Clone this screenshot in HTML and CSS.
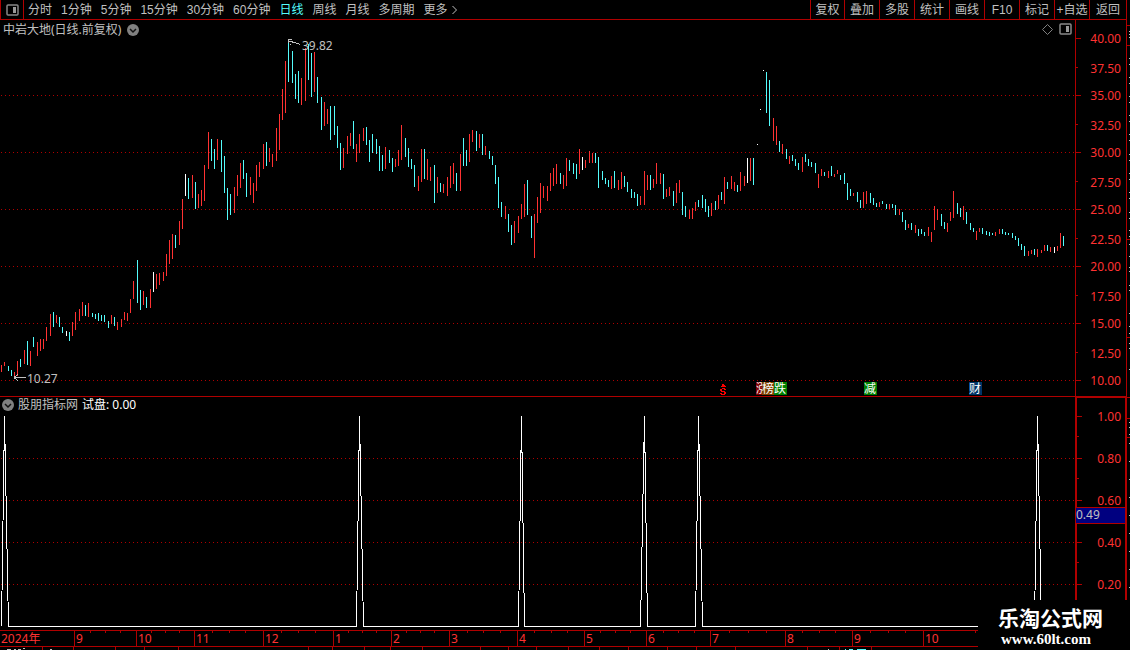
FILE: index.html
```
<!DOCTYPE html>
<html lang="zh-CN">
<head>
    <meta charset="UTF-8">
    <meta name="viewport" content="width=device-width, initial-scale=1.0">
    <title>中岩大地 日线</title>
    <link rel="stylesheet" href="styles.css">
</head>
<body>
    <div class="app">
        <header class="toolbar">
            <button class="layout-btn" aria-label="布局">
                <svg width="13" height="12" viewBox="0 0 13 12"><rect x="1" y="1" width="11" height="10" rx="1" fill="none" stroke="#888" stroke-width="1.5"/><rect x="7" y="3" width="3" height="6" fill="#999"/></svg>
            </button>
            <nav class="periods">
                <button>分时</button>
                <button>1分钟</button>
                <button>5分钟</button>
                <button>15分钟</button>
                <button>30分钟</button>
                <button>60分钟</button>
                <button class="active">日线</button>
                <button>周线</button>
                <button>月线</button>
                <button>多周期</button>
                <button>更多<svg width="8" height="10" viewBox="0 0 8 10"><path d="M2.5 1L6.5 5L2.5 9" fill="none" stroke="#c0c0c0"/></svg></button>
            </nav>
            <nav class="tools">
                <button>复权</button>
                <button>叠加</button>
                <button>多股</button>
                <button>统计</button>
                <button>画线</button>
                <button>F10</button>
                <button>标记</button>
                <button>+自选</button>
                <button>返回</button>
            </nav>
        </header>

        <section class="panel price">
            <div class="chart">
                <svg class="plot" shape-rendering="crispEdges">
                    <g transform="translate(0 -20)">
                        <g class="grid">
                            <line x1="1" y1="95.5" x2="100%" y2="95.5"/>
                            <line x1="1" y1="152.5" x2="100%" y2="152.5"/>
                            <line x1="1" y1="209.5" x2="100%" y2="209.5"/>
                            <line x1="1" y1="266.5" x2="100%" y2="266.5"/>
                            <line x1="1" y1="323.5" x2="100%" y2="323.5"/>
                            <line x1="1" y1="380.5" x2="100%" y2="380.5"/>
                        </g>
                        <path id="up" class="bar-up"/>
                        <path id="down" class="bar-down"/>
                        <path id="flat" class="bar-flat"/>
                        <path class="arrow" d="M288 39.5H292M289 41.5H293M292 42.5H296M296 43.5H299M299 44.5H300M288.5 40V43M290 44.5H291"/>
                        <path class="arrow" d="M14 377.5H26M15.5 376V379M16.5 375V376M17.5 374V375M16.5 379V380M17.5 380V381M14 376.5H16M14 378.5H16"/>
                    </g>
                </svg>
                <div class="caption">
                    <span>中岩大地(日线.前复权)</span>
                    <button class="drop" aria-label="展开"><svg width="12" height="12" viewBox="0 0 12 12"><circle cx="6" cy="6" r="6" fill="#808080"/><path d="M3 5L6 8L9 5" fill="none" stroke="#111" stroke-width="1.5"/></svg></button>
                </div>
                <div class="corner">
                    <svg width="11" height="11" viewBox="0 0 11 11"><path d="M5.5 .5L10.5 5.5L5.5 10.5L.5 5.5Z" fill="none" stroke="#808080"/></svg>
                    <svg width="13" height="12" viewBox="0 0 13 12"><rect x="1" y="1" width="11" height="10" rx="1" fill="none" stroke="#888" stroke-width="1.5"/><rect x="7" y="3" width="3" height="6" fill="#999"/></svg>
                </div>
                <span class="note high">39.82</span>
                <span class="note low">10.27</span>
                <svg class="mark dollar" width="7" height="12" viewBox="0 0 7 12" shape-rendering="crispEdges"><path d="M2 0H4V1H5V2H6V3H1V2H2ZM2 4H5V5H6V6H4V5H2V7H5V8H6V10H5V11H1V10H0V9H2V10H4V8H1V7H0V5H2Z" fill="#f00"/></svg>
                <span class="mark rise">涨</span>
                <span class="mark rank">榜</span>
                <span class="mark fall">跌</span>
                <span class="mark cut">减</span>
                <span class="mark report">财</span>
            </div>
            <ul class="scale">
                <li>40.00</li>
                <li>37.50</li>
                <li>35.00</li>
                <li>32.50</li>
                <li>30.00</li>
                <li>27.50</li>
                <li>25.00</li>
                <li>22.50</li>
                <li>20.00</li>
                <li>17.50</li>
                <li>15.00</li>
                <li>12.50</li>
                <li>10.00</li>
            </ul>
        </section>

        <section class="panel signal">
            <div class="chart">
                <svg class="plot" shape-rendering="crispEdges">
                    <g transform="translate(0 -397)">
                        <g class="grid">
                            <line x1="1" y1="458.5" x2="100%" y2="458.5"/>
                            <line x1="1" y1="500.5" x2="100%" y2="500.5"/>
                            <line x1="1" y1="542.5" x2="100%" y2="542.5"/>
                            <line x1="1" y1="584.5" x2="100%" y2="584.5"/>
                        </g>
                        <path id="spikes" class="spikes"/>
                    </g>
                </svg>
                <div class="caption">
                    <button class="drop" aria-label="展开"><svg width="12" height="12" viewBox="0 0 12 12"><circle cx="6" cy="6" r="6" fill="#808080"/><path d="M3 5L6 8L9 5" fill="none" stroke="#111" stroke-width="1.5"/></svg></button>
                    <span>股朋指标网</span>
                    <span class="value">试盘: 0.00</span>
                </div>
            </div>
            <ul class="scale">
                <li>1.00</li>
                <li></li>
                <li>0.80</li>
                <li></li>
                <li>0.60</li>
                <li></li>
                <li>0.40</li>
                <li></li>
                <li>0.20</li>
            </ul>
            <span class="cursor">0.49</span>
        </section>

        <ol class="months">
            <li>2024年</li>
            <li>9</li>
            <li>10</li>
            <li>11</li>
            <li>12</li>
            <li>1</li>
            <li>2</li>
            <li>3</li>
            <li>4</li>
            <li>5</li>
            <li>6</li>
            <li>7</li>
            <li>8</li>
            <li>9</li>
            <li>10</li>
        </ol>

        <!-- top edge of the tab row below -->
        <svg class="tabs-edge" shape-rendering="crispEdges">
            <path id="tabTicks" stroke="#b00000"/>
            <path d="M7 2.5H11M14 2.5H16M18 2.5H21M23 1.5H25M50 2.5H52M828 2.5H829" stroke="#c0c0c0"/>
            <path d="M845 2.5H846M849 2.5H853M857 2.5H866" stroke="#54fcfc"/>
        </svg>

        <!-- left edge of the quote panel -->
        <svg class="side-edge" shape-rendering="crispEdges">
            <path id="sideTicks" stroke="#b00000"/>
            <path id="sideText" stroke="#c0c0c0"/>
        </svg>

        <div class="brand">
            <strong>乐淘公式网</strong>
            <a href="#">www.60lt.com</a>
        </div>
    </div>
    <script src="chart.js"></script>
</body>
</html>
```
FILE: styles.css
```
* {
    box-sizing: border-box;
}

body {
    margin: 0;
    height: 100vh;
    overflow: hidden;
    background: #000;
    color: #c0c0c0;
    font: 12px/14px "Noto Sans", "Noto Sans CJK SC", sans-serif;
}

button {
    padding: 0;
    border: 0;
    background: none;
    color: inherit;
    font: inherit;
    white-space: nowrap;
}

ul, ol {
    margin: 0;
    padding: 0;
    list-style: none;
}

.app {
    position: relative;
    height: 100%;
    padding-right: 3px;
}

/* top bar */
.toolbar {
    display: flex;
    height: 20px;
    border: 1px solid #b00000;
    border-top: 0;
    font-family: "Liberation Sans", "Noto Sans CJK SC", sans-serif;
}

.layout-btn {
    display: flex;
    align-items: center;
    justify-content: center;
    width: 23px;
    border-right: 1px solid #b00000;
}

.periods {
    display: flex;
    gap: 9px;
    padding-left: 4px;
}

.periods .active {
    color: #54fcfc;
}

.periods svg {
    margin-left: 2px;
    vertical-align: -1px;
}

.tools {
    display: flex;
    margin-left: auto;
}

.tools button {
    width: 35px;
    border-left: 1px solid #b00000;
}

.tools button:first-child {
    width: 34px;
}

.tools button:last-child {
    width: 37px;
}

/* panels */
.panel {
    position: relative;
    display: grid;
    grid-template-columns: 1fr 52px;
}

.price {
    height: 377px;
    border-bottom: 1px solid #b00000;
}

.signal {
    height: 233px;
}

.chart {
    position: relative;
    overflow: hidden;
}

.plot {
    display: block;
    width: 100%;
    height: 100%;
}

.grid line {
    stroke: #b00000;
    stroke-dasharray: 1 3;
}

.bar-up {
    stroke: #ff3232;
}

.bar-down {
    stroke: #54fcfc;
}

.bar-flat {
    stroke: #fff;
}

.arrow {
    stroke: #c0c0c0;
}

.spikes {
    fill: none;
    stroke: #fff;
}

.caption {
    position: absolute;
    top: 3px;
    left: 3px;
    display: flex;
    gap: 6px;
}

.signal .caption {
    top: 1px;
    left: 2px;
    gap: 4px;
}

.drop {
    display: flex;
    align-items: center;
}

.value {
    color: #fff;
}

.corner {
    position: absolute;
    top: 3px;
    right: 3px;
    display: flex;
    align-items: center;
    gap: 6px;
}

.note {
    position: absolute;
}

.high {
    top: 19px;
    left: 302px;
}

.low {
    top: 352px;
    left: 27px;
}

.mark {
    position: absolute;
    top: 362px;
    width: 13px;
    height: 13px;
    color: #fff;
    line-height: 13px;
}

.dollar {
    top: 364px;
    left: 720px;
    width: 7px;
    height: 12px;
}

.rise {
    left: 756px;
    width: 6px;
    overflow: hidden;
    background: #800000;
}

.rank {
    left: 762px;
    width: 12px;
    background: #804000;
}

.fall {
    left: 774px;
    background: #008000;
}

.cut {
    left: 864px;
    background: #008000;
}

.report {
    left: 969px;
    background: #003468;
}

/* right hand scales */
.scale {
    padding-top: 12px;
    border: 1px solid #b00000;
    border-width: 0 1px;
    color: #ff3232;
}

.scale li {
    display: flex;
    justify-content: space-between;
    height: 30px;
    padding-right: 5px;
}

.scale li::before {
    content: "";
    width: 5px;
    height: 1px;
    margin-top: 6px;
    background: #b00000;
}

.scale li:nth-child(even) {
    height: 27px;
}

.scale li:nth-child(even)::before {
    width: 2px;
    margin-top: 5px;
}

.signal .scale {
    border-width: 1px 2px 0;
}

.signal .scale li {
    height: 21px;
    padding-right: 4px;
}

.cursor {
    position: absolute;
    top: 110px;
    right: 2px;
    width: 49px;
    height: 17px;
    border: 1px solid #b00000;
    border-width: 1px 0;
    background: #000080;
}

/* months */
.months {
    display: grid;
    grid-template-columns: 74fr 62fr 58fr 69fr 70fr 58fr 58fr 68fr 67fr 62fr 64fr 75fr 67fr 71fr 204fr;
    height: 17px;
    border: 1px solid #b00000;
    border-width: 1px 0;
    color: #ff3232;
    line-height: 16px;
}

.months li {
    padding-left: 1px;
    border-left: 1px solid #b00000;
    background:
        linear-gradient(#b00000, #b00000) 25% 0 / 1px 2px no-repeat,
        linear-gradient(#b00000, #b00000) 50% 0 / 1px 2px no-repeat,
        linear-gradient(#b00000, #b00000) 75% 0 / 1px 2px no-repeat;
}

.months li:first-child {
    border-left: 0;
    background: none;
}

.tabs-edge {
    display: block;
    width: 100%;
    height: 3px;
}

.side-edge {
    position: absolute;
    top: 0;
    right: 0;
    width: 3px;
    height: 100%;
}

.brand {
    position: absolute;
    top: 600px;
    right: 0;
    width: 152px;
    height: 50px;
    padding: 6px 0 0 20px;
    background: #000;
    color: #fff;
}

.brand strong {
    display: block;
    font-size: 21px;
    line-height: 24px;
}

.brand a {
    display: block;
    padding: 1px 0 0 3px;
    color: #fff;
    font: bold 15px/16px "Liberation Serif", serif;
    text-decoration: none;
}
```
FILE: chart.js
```
// x, high, low
const up = `1,365,372 4,362,366 14,372,376 17,361,376 24,350,364 30,351,366 37,342,356 40,339,351 43,339,349
46,327,341 50,314,336 56,315,323 72,322,336 75,312,330 79,309,321 82,302,316 88,303,317 111,315,324
117,322,330 121,319,327 124,312,320 127,313,321 130,299,313 133,281,299 143,291,305 150,289,308
156,274,289 159,273,285 163,272,281 166,254,276 169,240,264 172,234,259 179,221,245 182,199,229
192,175,198 198,194,208 201,190,206 204,165,201 208,132,169 217,139,160 234,187,213 237,175,196
240,163,188 250,177,195 253,183,203 256,165,191 259,162,177 263,144,169 269,148,162 272,154,167
276,128,161 279,114,150 282,89,120 285,61,113 301,78,105 305,48,101 314,52,92 324,102,126 327,109,124
343,148,168 347,136,154 350,133,146 356,144,162 359,134,153 363,128,141 385,147,169 395,159,167
398,150,166 401,125,160 418,176,191 421,149,182 427,159,180 430,167,181 437,177,193 443,184,193
447,177,196 450,166,188 453,163,184 460,154,191 469,134,162 472,130,142 479,134,148 485,146,155
505,206,219 514,221,243 518,216,233 521,204,219 524,184,217 534,214,258 537,197,223 540,183,213
543,186,198 547,186,201 550,173,191 553,168,186 556,164,184 563,175,189 566,158,186 579,149,174
585,160,168 589,151,163 592,153,163 611,176,189 618,180,190 621,172,189 640,196,205 644,171,205
647,175,190 653,179,188 656,163,184 660,173,184 666,189,197 669,187,196 676,183,203 679,180,193
689,210,219 692,208,219 695,202,211 711,203,216 718,195,209 724,177,204 731,176,189 734,182,191
740,172,191 744,176,186 750,158,181 773,118,141 776,126,145 782,144,154 789,156,164 802,157,172
818,174,188 821,169,176 828,171,178 834,174,177 837,170,174 853,193,196 863,192,208 866,191,204
879,202,207 889,204,209 899,209,215 908,224,228 915,225,233 928,227,236 931,232,242 934,206,230
937,209,220 947,223,232 950,212,221 953,191,218 963,206,220 976,231,240 979,228,232 995,232,236
999,229,234 1028,251,256 1031,250,254 1037,249,257 1041,250,253 1044,245,251 1050,247,252
1057,246,251 1060,233,248`;

const down = `8,366,371 11,370,376 20,359,367 27,341,365 33,337,347 53,312,327 59,317,327 62,327,333 69,332,341
85,305,316 92,313,317 95,314,319 98,313,321 101,315,321 104,315,322 108,321,328 114,317,326
137,260,303 140,290,310 146,297,308 175,235,248 188,178,199 195,182,209 211,139,161 214,149,169
221,140,172 224,156,193 227,188,220 230,194,215 243,160,179 246,173,197 266,142,166 288,42,82
292,51,83 295,74,99 298,71,103 308,44,80 311,53,97 317,77,103 321,97,130 330,106,140 334,106,135
337,126,148 340,143,170 353,121,149 366,127,145 369,140,162 372,134,153 376,139,154 379,146,171
382,155,171 389,150,163 392,158,172 405,138,157 408,148,167 411,159,169 414,165,187 424,149,179
434,165,203 440,183,192 456,173,191 463,138,166 466,150,166 476,131,151 482,134,155 489,151,159
492,156,165 495,165,184 498,177,208 501,202,217 508,214,232 511,225,245 527,180,215 531,216,238
560,173,184 569,160,171 573,163,174 576,164,179 595,153,163 598,157,188 602,171,180 605,178,184
608,180,187 614,171,188 624,176,187 627,182,192 631,189,198 634,192,198 637,194,206 650,175,190
663,174,199 673,191,206 682,192,215 685,206,217 698,200,207 702,195,208 705,199,212 708,206,217
715,201,210 721,192,200 727,182,189 737,185,192 753,158,185 766,72,113 769,80,126 779,141,152
786,149,159 792,155,161 795,159,166 798,163,170 805,154,162 808,159,166 811,162,167 815,163,173
824,172,176 831,166,176 840,175,180 844,173,184 847,183,200 850,189,196 857,192,202 860,200,208
870,193,203 873,198,205 876,203,207 882,201,204 886,204,209 892,204,208 895,205,215 902,212,222
905,220,230 911,223,230 918,229,236 921,229,234 924,232,236 941,214,226 944,222,229 957,203,214
960,208,217 966,212,224 970,223,230 973,228,232 982,228,234 986,231,235 989,232,236 992,233,235
1002,229,234 1005,232,235 1008,233,235 1012,233,238 1015,236,240 1018,238,246 1021,244,250
1024,246,256 1034,249,255 1047,245,251 1063,236,246`;

const flat = `66,331,336 153,272,292 185,174,196 582,157,170 747,158,183 757,144,145 760,109,110 763,70,71
1054,247,253`;

function drawBars(id, data) {
    const d = data.split(/\s+/).map(bar => {
        const [x, high, low] = bar.split(',');
        return `M${x}.5 ${high}V${low}`;
    });
    document.getElementById(id).setAttribute('d', d.join(''));
}

drawBars('up', up);
drawBars('down', down);
drawBars('flat', flat);

// left foot, peak, right foot
const spikes = [[1, 4, 8], [356, 359, 363], [518, 521, 524], [640, 644, 647], [695, 698, 702], [1034, 1037, 1041]];
let line = '';
spikes.forEach(([left, peak, right], i) => {
    line += `${i ? 'L' : 'M'}${left}.5 626.5L${peak}.5 416.5L${right}.5 626.5`;
});
document.getElementById('spikes').setAttribute('d', line + 'H1063');

const tabTicks = [42, 73, 115, 144, 178, 308, 332, 364, 390, 422, 480, 508, 536, 568, 599, 628, 667, 696, 735, 807, 839, 871];
document.getElementById('tabTicks').setAttribute('d', tabTicks.map(x => `M${x}.5 0V3`).join(''));

const sideTicks = [25, 45, 239, 337, 397, 418, 437];
document.getElementById('sideTicks').setAttribute('d', sideTicks.map(y => `M0 ${y}.5H3`).join(''));

const sideText = [31, 34, 37, 58, 64, 77, 83, 96, 102, 115, 121, 134, 140, 154, 160, 173, 179, 192, 198, 212, 218,
    230, 236, 244, 256, 267, 271, 285, 290, 313, 326, 333, 343, 348, 369, 422, 427, 434, 443, 461, 479, 497, 515,
    533, 551, 569, 587];
document.getElementById('sideText').setAttribute('d', sideText.map(y => `M2 ${y}.5H3`).join(''));
```
